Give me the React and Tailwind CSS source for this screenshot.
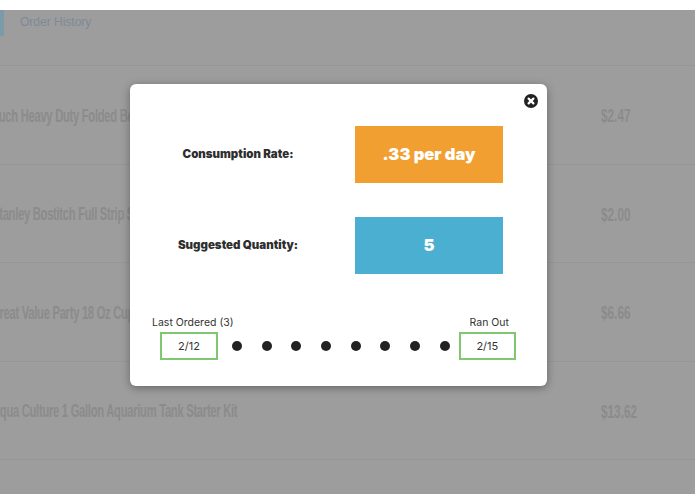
import React from 'react';

const rows = [
  { name: 'Pouch Heavy Duty Folded Box', cut: 'ml-[-15px]', price: '$2.47' },
  { name: 'Stanley Bostitch Full Strip Stapler', cut: 'ml-[-8px]', price: '$2.00' },
  { name: 'Great Value Party 18 Oz Cups', cut: 'ml-[-9px]', price: '$6.66' },
  { name: 'Aqua Culture 1 Gallon Aquarium Tank Starter Kit', cut: 'ml-[-8px]', price: '$13.62' },
];

const CloseIcon = () => (
  <svg width="14" height="14" viewBox="0 0 14 14">
    <circle cx="7" cy="7" r="7" fill="#222" />
    <path d="M4.6 4.6 L9.4 9.4 M9.4 4.6 L4.6 9.4" stroke="#fff" strokeWidth="2.2" strokeLinecap="round" />
  </svg>
);

export default function App() {
  return (
    <div className="relative w-[695px] h-[494px] overflow-hidden bg-white font-['Liberation_Sans',sans-serif]">
      <div className="h-[10px] bg-white" />
      <div className="h-[484px] bg-[#9d9d9d]">
        <div className="h-[56px] border-b border-[#969696]">
          <div className="flex items-center h-[26px]">
            <div className="w-[4px] h-[26px] bg-[#7c9ba8]" />
            <span className="ml-[16px] text-[12px] text-[#7d8a96] -mt-[3px]">Order History</span>
          </div>
        </div>
        {rows.map((r) => (
          <div key={r.price} className="h-[98.5px] border-b border-[#969696] flex items-center relative overflow-hidden pt-[2px]">
            <span className={`${r.cut} origin-left scale-x-[0.59] whitespace-nowrap text-[19px] font-bold tracking-tight text-[#8b8b8b]`}>
              {r.name}
            </span>
            <span className="absolute left-[601px] top-[36px] origin-left scale-x-[0.62] text-[19px] font-bold text-[#8b8b8b]">
              {r.price}
            </span>
          </div>
        ))}
      </div>

      <div className="absolute left-[130px] top-[84px] w-[417px] h-[302px] bg-white rounded-[6px] shadow-[0_2px_8px_rgba(0,0,0,0.35)] pt-[42px] font-['Inter',sans-serif]">
        <button className="absolute top-[10px] right-[9px]">
          <CloseIcon />
        </button>

        <div className="flex items-center">
          <div className="w-[216px] text-center text-[11.5px] font-black text-[#2e2e2e]">Consumption Rate:</div>
          <div className="ml-[9px] w-[148px] h-[57px] bg-[#f29f32] flex items-center justify-center text-white text-[16.5px] font-black">
            .33 per day
          </div>
        </div>

        <div className="flex items-center mt-[34px]">
          <div className="w-[216px] text-center text-[11.5px] font-black text-[#2e2e2e]">Suggested Quantity:</div>
          <div className="ml-[9px] w-[148px] h-[57px] bg-[#4aafd0] flex items-center justify-center text-white text-[16.5px] font-black">
            5
          </div>
        </div>

        <div className="flex justify-between mt-[43px] pl-[22px] pr-[38px] text-[10.5px] leading-[12px] text-[#333]">
          <span>Last Ordered (3)</span>
          <span>Ran Out</span>
        </div>

        <div className="flex items-center mt-[3px] pl-[30px]">
          <div className="w-[58px] h-[28px] border-2 border-[#80c870] flex items-center justify-center text-[11px] text-[#333]">2/12</div>
          <div className="flex items-center gap-[19.7px] ml-[14px]">
            {Array.from({ length: 8 }).map((_, i) => (
              <div key={i} className="w-[10px] h-[10px] rounded-full bg-[#222]" />
            ))}
          </div>
          <div className="ml-[9px] w-[57px] h-[28px] border-2 border-[#80c870] flex items-center justify-center text-[11px] text-[#333]">2/15</div>
        </div>
      </div>
    </div>
  );
}
